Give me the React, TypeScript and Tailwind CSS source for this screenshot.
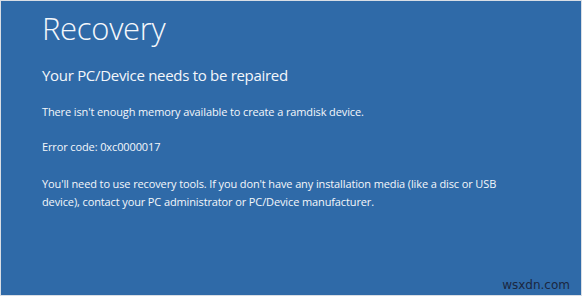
export default function App() {
  return (
    <div className="relative h-[296px] w-[582px] overflow-hidden border border-[#d9dee5] bg-[#2f6aa8] font-['Open_Sans',sans-serif] text-[#f4f7fb]">
      <div className="flex flex-col pl-[41px] pt-[6px]">
        <h1 className="text-[31px] font-light leading-[42px] tracking-[-0.3px]">Recovery</h1>
        <h2 className="mt-[15px] text-[15px] font-normal leading-[22px] tracking-[-0.3px]">Your PC/Device needs to be repaired</h2>
        <p className="mt-[17px] text-[11px] leading-[18px] tracking-[-0.12px]">There isn't enough memory available to create a ramdisk device.</p>
        <p className="mt-[17px] text-[11px] leading-[18px] tracking-[-0.12px]">Error code: 0xc0000017</p>
        <p className="mt-[19px] max-w-[482px] text-[11px] leading-[18px] tracking-[-0.12px]">
          You'll need to use recovery tools. If you don't have any installation media (like a disc or USB device), contact your PC administrator or PC/Device manufacturer.
        </p>
      </div>
      <span className="absolute bottom-[4px] right-[11px] font-['DejaVu_Sans',sans-serif] text-[12px] leading-none text-[#1b2740]">wsxdn.com</span>
    </div>
  );
}
